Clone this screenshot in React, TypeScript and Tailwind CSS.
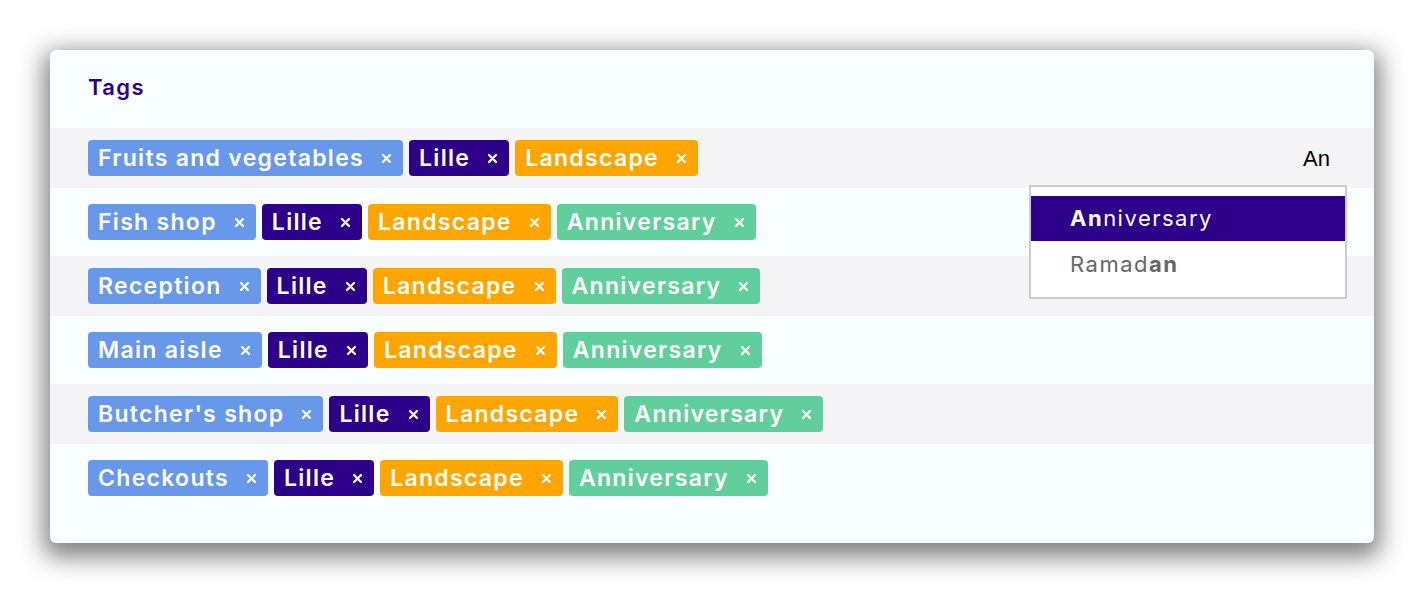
import React from 'react';

type TagKind = 'place' | 'city' | 'theme' | 'event';

const TAG_STYLES: Record<TagKind, string> = {
    place: 'bg-[#6798ea]',
    city: 'bg-[#2c0089]',
    theme: 'bg-[#ffa500]',
    event: 'bg-[#60cf9b]',
};

const rows: { place: string; extra: boolean }[] = [
    { place: 'Fruits and vegetables', extra: false },
    { place: 'Fish shop', extra: true },
    { place: 'Reception', extra: true },
    { place: 'Main aisle', extra: true },
    { place: "Butcher's shop", extra: true },
    { place: 'Checkouts', extra: true },
];

function Tag({ label, kind }: { label: string; kind: TagKind }) {
    return (
        <span className={`flex h-[36px] items-center rounded-[4px] pl-[10px] pr-[12px] text-white ${TAG_STYLES[kind]}`}>
            <span className="text-[23px] font-semibold leading-none tracking-[1.3px]">{label}</span>
            <svg className="ml-[18px]" width="9" height="9" viewBox="0 0 9 9">
                <path d="M1 1 L8 8 M8 1 L1 8" stroke="white" strokeWidth="2.2" strokeLinecap="square" />
            </svg>
        </span>
    );
}

export default function App() {
    return (
        <div className="min-h-screen bg-white pt-[50px] px-[50px]" style={{ fontFamily: 'Inter, "Noto Sans", sans-serif' }}>
            <div className="relative h-[493px] w-[1324px] rounded-[6px] bg-[#f9feff] shadow-[0_8px_24px_6px_rgba(0,0,0,0.5)]">
                <div className="flex h-[78px] items-center px-[38px] pb-[4px]">
                    <h2 className="text-[22px] font-semibold tracking-[1.4px] text-[#2c0089]">Tags</h2>
                </div>

                {rows.map((row, i) => (
                    <div
                        key={row.place}
                        className={`flex items-center gap-[6px] px-[38px] ${i % 2 === 0 ? 'bg-[#f5f5f7] py-[12px]' : 'py-[16px]'}`}
                    >
                        <Tag label={row.place} kind="place" />
                        <Tag label="Lille" kind="city" />
                        <Tag label="Landscape" kind="theme" />
                        {row.extra && <Tag label="Anniversary" kind="event" />}
                        {i === 0 && (
                            <span
                                className="ml-auto pr-[6px] text-[22px] text-black"
                                style={{ fontFamily: '"Liberation Sans", Arial, sans-serif' }}
                            >
                                An
                            </span>
                        )}
                    </div>
                ))}

                {/* autocomplete suggestions */}
                <div className="absolute left-[979px] top-[135px] h-[114px] w-[318px] border-2 border-[#cccccc] bg-white pt-[9px]">
                    <div className="flex h-[45px] items-center bg-[#2c0089] pl-[39px] text-[22px] tracking-[1.5px] text-white">
                        <span className="font-bold">An</span>
                        <span>niversary</span>
                    </div>
                    <div className="flex h-[47px] items-center pl-[39px] text-[22px] tracking-[1.5px] text-[#666666]">
                        <span>Ramad</span>
                        <span className="font-bold">an</span>
                    </div>
                </div>
            </div>
        </div>
    );
}
